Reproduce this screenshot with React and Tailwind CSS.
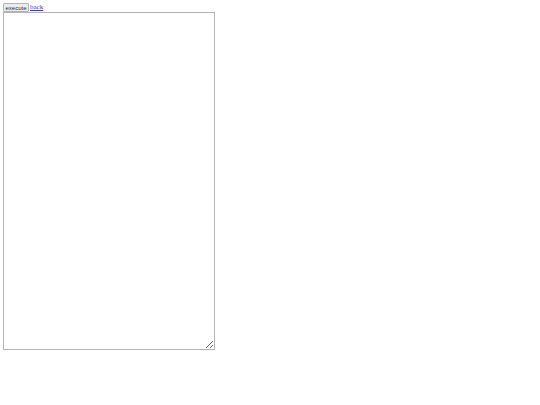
export default function App() {
  return (
    <div className="pl-[3px] pt-[3px]">
      <div className="flex items-end h-[9px]">
        <button className="h-[9px] w-[26px] border border-[#b4b4b4] bg-[#ececec] rounded-[1px] text-[6px] leading-none text-[#333] flex items-center justify-center font-['Liberation_Sans',sans-serif]">
          execute
        </button>
        <a href="#" className="ml-[1px] text-[7px] leading-[9px] text-[#3a3ad8] underline font-['Liberation_Serif',serif]">
          back
        </a>
      </div>
      <textarea className="block w-[212px] h-[338px] border border-[#b4b4b4] bg-white resize" />
    </div>
  );
}
